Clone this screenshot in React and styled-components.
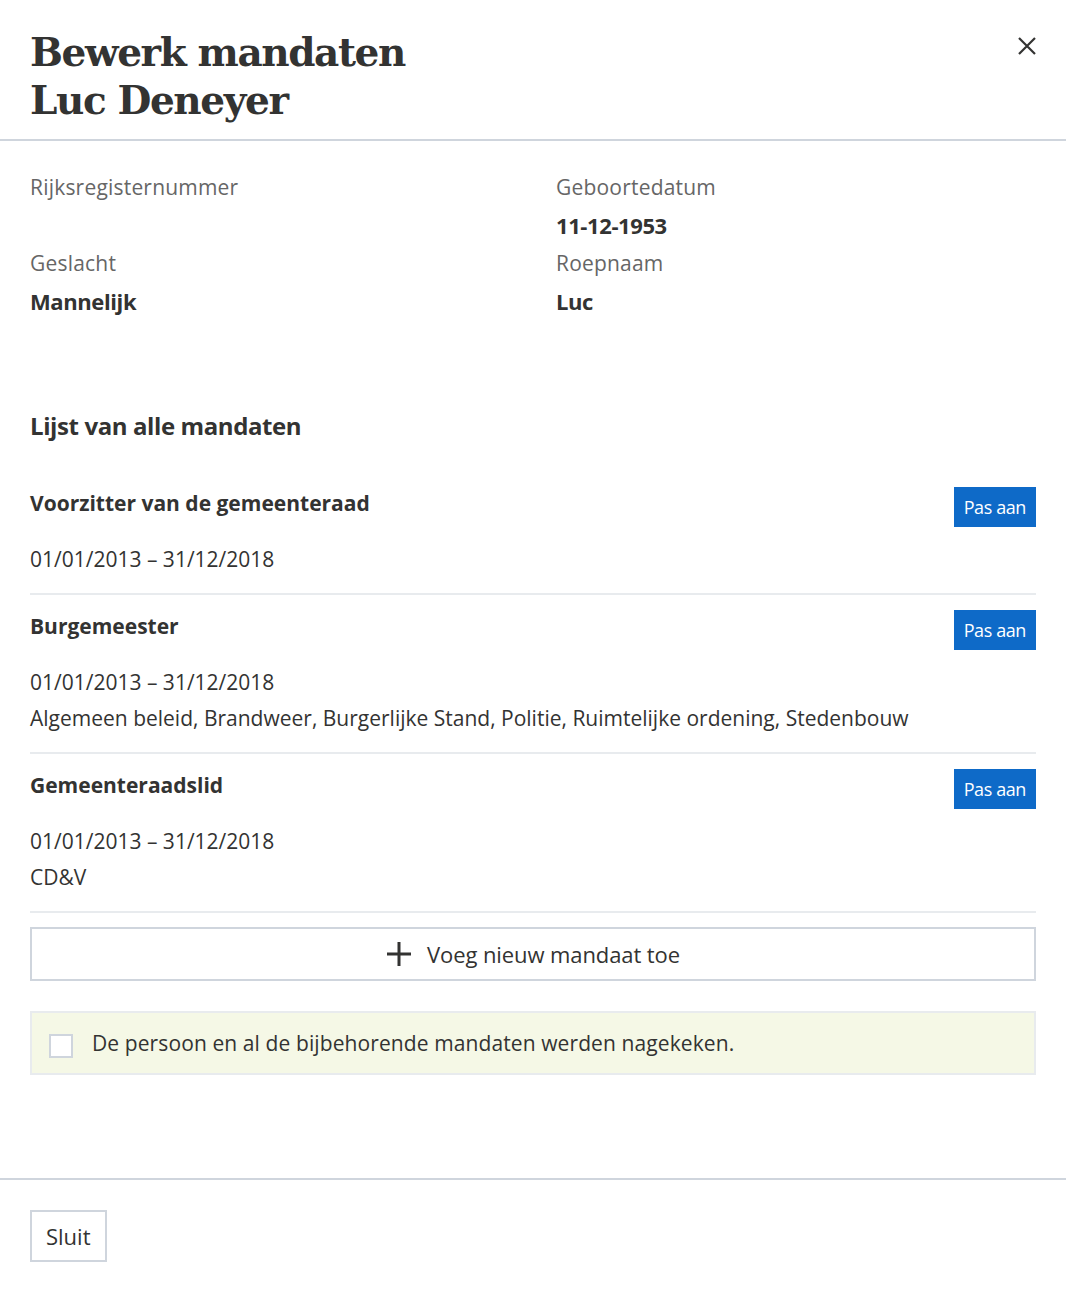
import React from "react";
import styled, { createGlobalStyle } from "styled-components";

const GlobalStyle = createGlobalStyle`
  html, body {
    margin: 0;
    padding: 0;
    background: #fff;
  }
  body {
    font-family: "Open Sans", "Noto Sans", sans-serif;
    color: #333332;
  }
  * {
    box-sizing: border-box;
  }
`;

const mandates = [
  {
    title: "Voorzitter van de gemeenteraad",
    period: "01/01/2013 – 31/12/2018",
    extra: null,
  },
  {
    title: "Burgemeester",
    period: "01/01/2013 – 31/12/2018",
    extra:
      "Algemeen beleid, Brandweer, Burgerlijke Stand, Politie, Ruimtelijke ordening, Stedenbouw",
  },
  {
    title: "Gemeenteraadslid",
    period: "01/01/2013 – 31/12/2018",
    extra: "CD&V",
  },
];

const App = () => {
  return (
    <>
      <GlobalStyle />
      <Modal>
        <Header>
          <Title>
            Bewerk mandaten
            <br />
            Luc Deneyer
          </Title>
          <CloseButton aria-label="Sluit">
            <svg width="20" height="20" viewBox="0 0 20 20">
              <path
                d="M2 2 L18 18 M18 2 L2 18"
                stroke="#333332"
                strokeWidth="2.2"
                fill="none"
              />
            </svg>
          </CloseButton>
        </Header>

        <Body>
          <InfoGrid>
            <InfoItem>
              <Label>Rijksregisternummer</Label>
              <Value />
            </InfoItem>
            <InfoItem>
              <Label>Geboortedatum</Label>
              <Value>11-12-1953</Value>
            </InfoItem>
            <InfoItem>
              <Label>Geslacht</Label>
              <Value>Mannelijk</Value>
            </InfoItem>
            <InfoItem>
              <Label>Roepnaam</Label>
              <Value>Luc</Value>
            </InfoItem>
          </InfoGrid>

          <SectionTitle>Lijst van alle mandaten</SectionTitle>

          <MandateList>
            {mandates.map((m) => (
              <MandateRow key={m.title}>
                <MandateInfo>
                  <MandateTitle>{m.title}</MandateTitle>
                  <MandateText $spaced>{m.period}</MandateText>
                  {m.extra && <MandateText>{m.extra}</MandateText>}
                </MandateInfo>
                <PrimaryButton>Pas aan</PrimaryButton>
              </MandateRow>
            ))}
          </MandateList>

          <AddButton>
            <svg width="26" height="26" viewBox="0 0 26 26">
              <path
                d="M13 1 V25 M1 13 H25"
                stroke="#333332"
                strokeWidth="3"
                fill="none"
              />
            </svg>
            Voeg nieuw mandaat toe
          </AddButton>

          <CheckPanel>
            <CheckBox />
            <span>De persoon en al de bijbehorende mandaten werden nagekeken.</span>
          </CheckPanel>
        </Body>

        <Footer>
          <SecondaryButton>Sluit</SecondaryButton>
        </Footer>
      </Modal>
    </>
  );
};

export default App;

const Modal = styled.div`
  width: 1066px;
  min-height: 1292px;
  display: flex;
  flex-direction: column;
  background: #fff;
`;

const Header = styled.header`
  display: flex;
  justify-content: space-between;
  align-items: flex-start;
  padding: 28px 30px 15px 30px;
  border-bottom: 2px solid #cfd5dd;
`;

const Title = styled.h1`
  margin: 0;
  font-family: "DejaVu Serif", "Liberation Serif", serif;
  font-weight: 700;
  font-size: 39px;
  line-height: 48px;
  letter-spacing: -1.4px;
  color: #333332;
`;

const CloseButton = styled.button`
  border: none;
  background: none;
  padding: 0;
  margin-top: 8px;
  margin-right: -1px;
  width: 20px;
  height: 20px;
  cursor: pointer;
  display: flex;
`;

const Body = styled.div`
  padding: 33px 30px 0 30px;
  flex: 1;
`;

const InfoGrid = styled.div`
  display: grid;
  grid-template-columns: 526px 1fr;
  row-gap: 12px;
`;

const InfoItem = styled.div`
  display: flex;
  flex-direction: column;
`;

const Label = styled.div`
  font-size: 21px;
  line-height: 26px;
  letter-spacing: 0.2px;
  color: #666666;
  height: 26px;
`;

const Value = styled.div`
  font-size: 22px;
  line-height: 26px;
  font-weight: 700;
  color: #333332;
  height: 26px;
  margin-top: 12px;
  letter-spacing: -0.4px;
`;

const SectionTitle = styled.h2`
  margin: 97px 0 0 0;
  font-size: 24px;
  line-height: 30px;
  font-weight: 700;
  color: #333332;
  letter-spacing: -0.4px;
`;

const MandateList = styled.div`
  margin-top: 48px;
  display: flex;
  flex-direction: column;
`;

const MandateRow = styled.div`
  display: flex;
  justify-content: space-between;
  align-items: flex-start;
  padding: 0 0 16px 0;
  border-bottom: 2px solid #e8ebee;
  & + & {
    padding-top: 17px;
  }
`;

const MandateInfo = styled.div`
  display: flex;
  flex-direction: column;
`;

const MandateTitle = styled.div`
  font-size: 21px;
  line-height: 28px;
  font-weight: 700;
  letter-spacing: 0;
  color: #333332;
`;

const MandateText = styled.div`
  font-size: 21px;
  line-height: 36px;
  color: #333332;
  letter-spacing: 0;
  margin-top: ${(p) => (p.$spaced ? "24px" : "0")};
`;

const PrimaryButton = styled.button`
  height: 40px;
  padding: 0 10px;
  margin-top: -2px;
  border: none;
  background: #0e6ac8;
  color: #fff;
  font-family: "Open Sans", sans-serif;
  font-size: 18px;
  letter-spacing: -0.4px;
  cursor: pointer;
`;

const AddButton = styled.button`
  margin-top: 14px;
  width: 100%;
  height: 54px;
  display: flex;
  align-items: center;
  justify-content: center;
  gap: 15px;
  background: #fff;
  border: 2px solid #cfd5dd;
  font-family: "Open Sans", sans-serif;
  font-size: 22px;
  color: #333332;
  letter-spacing: -0.1px;
  cursor: pointer;
`;

const CheckPanel = styled.label`
  margin-top: 30px;
  height: 64px;
  display: flex;
  align-items: center;
  gap: 19px;
  padding: 0 17px;
  background: #f5f8e6;
  border: 2px solid #e8ebee;
  font-size: 21px;
  color: #333332;
  letter-spacing: 0.1px;
`;

const CheckBox = styled.span`
  width: 24px;
  height: 24px;
  flex-shrink: 0;
  background: #fff;
  border: 2px solid #cfd5dd;
  margin-top: 6px;
`;

const Footer = styled.footer`
  border-top: 2px solid #cfd5dd;
  padding: 30px 30px 30px 30px;
`;

const SecondaryButton = styled.button`
  height: 52px;
  padding: 0 14px;
  background: #fff;
  border: 2px solid #cfd5dd;
  font-family: "Open Sans", sans-serif;
  font-size: 22px;
  color: #333332;
  cursor: pointer;
`;
